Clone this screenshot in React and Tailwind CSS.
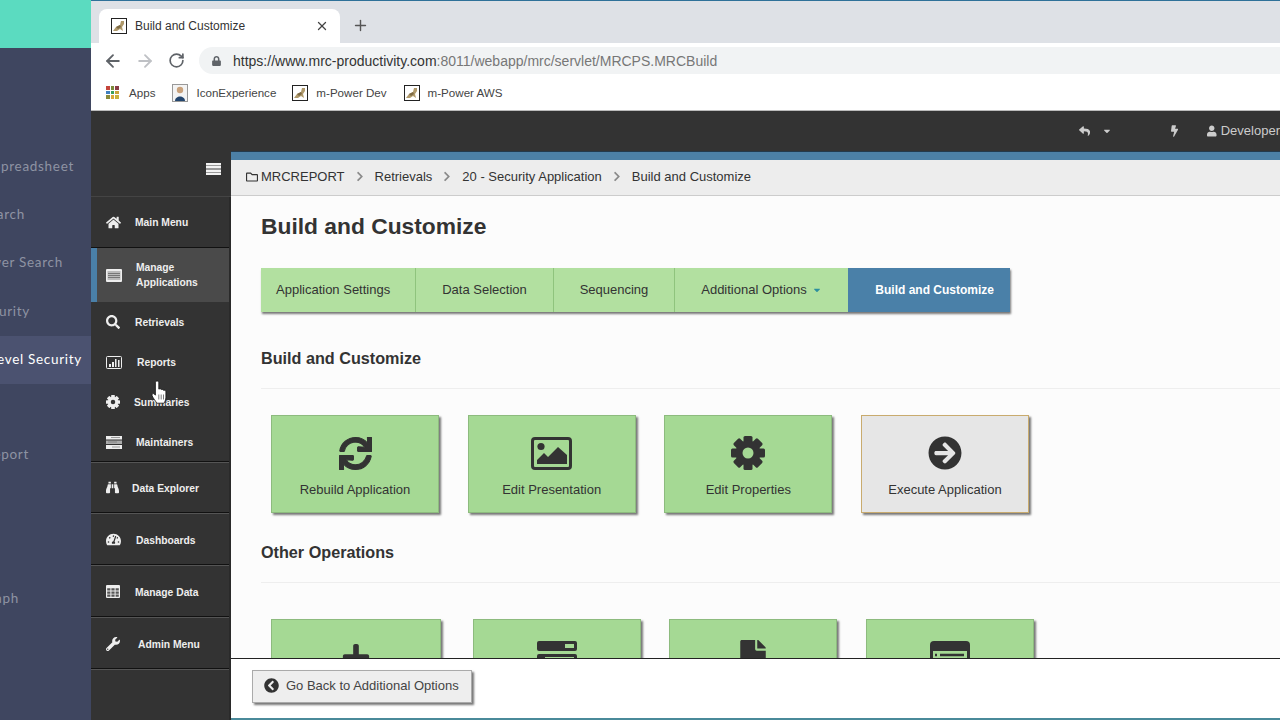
import React from 'react';
import { ArrowLeft, ArrowRight, Plus, RotateCw, X } from 'lucide-react';
import {
  FaArrowCircleRight, FaBinoculars, FaBolt, FaCaretDown, FaChevronCircleLeft,
  FaChevronRight, FaFile, FaHome, FaLock, FaPlus, FaRegFolder, FaReply,
  FaSearch, FaSync, FaTachometerAlt, FaUser, FaWrench,
} from 'react-icons/fa';

function CatIcon() {
  return (
    <svg viewBox="0 0 16 16" className="w-[16px] h-[16px] shrink-0">
      <rect x="0.5" y="0.5" width="15" height="15" fill="#fff" stroke="#222" />
      <path d="M2 13 L5 9 L9 7 L10 3 L13 3 L13 6 L11 9 L12 13 L9 11 L6 13 Z" fill="#b09a6c" />
      <path d="M5 9 L9 7 L10 9 L7 11 Z" fill="#7d6a45" />
    </svg>
  );
}

function PersonIcon() {
  return (
    <svg viewBox="0 0 16 18" className="w-[16px] h-[18px] shrink-0">
      <rect x="0.5" y="0.5" width="15" height="17" fill="#f4f4f4" stroke="#999" />
      <circle cx="8" cy="6" r="3.2" fill="#c9a27c" />
      <path d="M3 17 C3 11 13 11 13 17 Z" fill="#24466e" />
    </svg>
  );
}

function AppsIcon() {
  const colors = ['#c5453b', '#7a8a3a', '#8a3b46', '#3f7fbf', '#3ba05a', '#c9a23a', '#8a8a3a', '#d9a83a', '#c9b03a'];
  return (
    <div className="grid grid-cols-3 gap-[1px] w-[13px] h-[13px]">
      {colors.map((c, i) => <span key={i} style={{ backgroundColor: c }} />)}
    </div>
  );
}

function ManageIcon() {
  return (
    <svg viewBox="0 0 16 13" className="w-[16px] h-[13px] shrink-0">
      <rect width="16" height="13" rx="1" fill="#eee" />
      <rect x="1.5" y="2" width="13" height="9" fill="#bbb" />
      <path d="M2 4.5h12M2 6.5h12M2 8.5h12" stroke="#666" strokeWidth="0.8" />
    </svg>
  );
}

function ReportsIcon() {
  return (
    <svg viewBox="0 0 16 13" className="w-[16px] h-[13px] shrink-0">
      <rect x="0.5" y="0.5" width="15" height="12" rx="1" fill="#333" stroke="#eee" />
      <path d="M3 8h2v3H3zM6 6h2v5H6zM9 3h1.5v8H9zM12 4h1.5v7H12z" fill="#eee" />
    </svg>
  );
}

function MaintainIcon() {
  return (
    <svg viewBox="0 0 16 13" className="w-[16px] h-[13px] shrink-0">
      <rect width="16" height="3.5" fill="#eee" />
      <rect y="4.5" width="16" height="3.5" fill="#aaa" />
      <rect y="9" width="16" height="4" fill="#eee" />
      <path d="M5 1.5h9M2 6h9M6 11h8" stroke="#777" strokeWidth="0.7" />
    </svg>
  );
}

function TableIcon() {
  return (
    <svg viewBox="0 0 14 13" className="w-[14px] h-[13px] shrink-0">
      <rect width="14" height="13" rx="1" fill="#eee" />
      <path d="M1.2 3.2h3.2v2.4H1.2zM5.4 3.2h3.2v2.4H5.4zM9.6 3.2h3.2v2.4H9.6zM1.2 6.4h3.2v2.4H1.2zM5.4 6.4h3.2v2.4H5.4zM9.6 6.4h3.2v2.4H9.6zM1.2 9.6h3.2v2.2H1.2zM5.4 9.6h3.2v2.2H5.4zM9.6 9.6h3.2v2.2H9.6z" fill="#555" />
    </svg>
  );
}

// blocky eight tooth gear, the hole shows the colour behind it
function GearIcon({ className, hole }) {
  return (
    <svg viewBox="0 0 34 34" className={className}>
      {[0, 45, 90, 135].map((a) => (
        <rect key={a} x="12.5" y="0" width="9" height="34" rx="1.5" fill="currentColor" transform={`rotate(${a} 17 17)`} />
      ))}
      <circle cx="17" cy="17" r="12.5" fill="currentColor" />
      <circle cx="17" cy="17" r="5.5" fill={hole} />
    </svg>
  );
}

function PictureIcon() {
  return (
    <svg viewBox="0 0 41 33" className="w-[41px] h-[33px]">
      <rect x="1.5" y="1.5" width="38" height="30" rx="2.5" fill="none" stroke="currentColor" strokeWidth="3" />
      <circle cx="10" cy="9.5" r="3.6" fill="currentColor" />
      <path d="M6 27v-4l7-7 4 4 10-10 9 8v9z" fill="currentColor" />
    </svg>
  );
}

function ServerIcon() {
  return (
    <svg viewBox="0 0 40 32" className="w-[40px] h-[32px]">
      <rect width="40" height="10" rx="2" fill="#333" />
      <rect x="28" y="3" width="9" height="4" fill="#a5d994" />
      <rect y="13" width="40" height="10" rx="2" fill="#333" />
      <rect x="8" y="16" width="29" height="4" fill="#a5d994" />
      <rect y="26" width="40" height="6" rx="2" fill="#333" />
    </svg>
  );
}

function CardListIcon() {
  return (
    <svg viewBox="0 0 40 32" className="w-[40px] h-[32px]">
      <rect width="40" height="32" rx="4" fill="#333" />
      <rect x="3" y="10" width="34" height="19" fill="#a5d994" />
      <path d="M10 14h24M10 19h24" stroke="#333" strokeWidth="2.5" />
      <path d="M5 14h2M5 19h2" stroke="#333" strokeWidth="2.5" />
    </svg>
  );
}

function HandCursor() {
  return (
    <svg viewBox="0 0 16 24" className="absolute left-[151px] top-[380px] w-[16px] h-[25px]">
      <path
        d="M4.4 2.2c0-2.2 3.4-2.2 3.4 0v6.4l.6-.2c.9-.3 1.8 0 2 .7.8-.4 1.9-.1 2.1.7.9-.3 2.4.1 2.4 1.3v5.6c0 2.6-1.2 4.8-1.8 6H5.800c-1-2-4.600-6-4.800-8-.2-1.600 1.600-2.100 2.400-1.100l1 1.100z"
        fill="#fff"
        stroke="#111"
        strokeWidth="0.8"
      />
      <path d="M7.800 14v5M10.200 14v5M12.500 14v5" stroke="#444" strokeWidth="0.7" />
    </svg>
  );
}

const menu = [
  { label: 'Main Menu', icon: <FaHome className="w-[15px] h-[15px]" />, h: 'h-[51px]', ml: 'ml-[14px]', line: true },
  { label: 'Manage Applications', icon: <ManageIcon />, h: 'h-[54px]', ml: 'ml-[15px]', active: true },
  { label: 'Retrievals', icon: <FaSearch className="w-[14px] h-[14px]" />, h: 'h-[40px]', ml: 'ml-[14px]' },
  { label: 'Reports', icon: <ReportsIcon />, h: 'h-[40px]', ml: 'ml-[16px]' },
  { label: 'Summaries', icon: <GearIcon className="w-[14px] h-[14px] shrink-0" hole="#333" />, h: 'h-[40px]', ml: 'ml-[13px]' },
  { label: 'Maintainers', icon: <MaintainIcon />, h: 'h-[40px]', ml: 'ml-[15px]', line: true, pt: 'pt-[1px]' },
  { label: 'Data Explorer', icon: <FaBinoculars className="w-[13px] h-[13px]" />, h: 'h-[51px]', ml: 'ml-[11px]', line: true, pt: 'pt-[1px]' },
  { label: 'Dashboards', icon: <FaTachometerAlt className="w-[15px] h-[15px]" />, h: 'h-[52px]', ml: 'ml-[15px]', line: true, pt: 'pt-[2px]' },
  { label: 'Manage Data', icon: <TableIcon />, h: 'h-[52px]', ml: 'ml-[14px]', line: true, pt: 'pt-[2px]' },
  { label: 'Admin Menu', icon: <FaWrench className="w-[14px] h-[14px]" />, h: 'h-[52px]', ml: 'ml-[17px]', line: true, pt: 'pt-[2px]' },
];

const leftItems = [
  { label: 'Spreadsheet', cls: 'pr-[17px] pt-[2px]' },
  { label: 'Search', cls: 'pr-[66px] pt-[2px]' },
  { label: 'Power Search', cls: 'pr-[28px] pt-[2px] mb-[1px]' },
  { label: 'Security', cls: 'pr-[61px] pt-[2px] mb-[2px]' },
  { label: 'Row Level Security', cls: 'pr-[9px] pb-[2px]', active: true },
  { label: '' },
  { label: 'Report', cls: 'pr-[62px] pb-[3px]' },
  { label: '' },
  { label: '' },
  { label: 'Graph', cls: 'pr-[72px] pb-[4px]' },
];

function ActionCard({ icon, label, running, className = 'w-[168px]' }) {
  return (
    <div className={`${className} h-[98px] shrink-0 flex flex-col items-center pt-[20px] shadow-[2px_2px_2px_#777] border ${running ? 'bg-[#e6e6e6] border-[#c9ab6e]' : 'bg-[#a5d994] border-[#8dbb7e]'}`}>
      <div className="h-[34px] flex items-center text-[#333]">{icon}</div>
      <div className="mt-[11px] text-[13px] leading-[18px] text-[#333]">{label}</div>
    </div>
  );
}

function Crumb() {
  return <FaChevronRight className="mx-[10px] w-[10px] h-[11px] text-[#8a8a8a]" />;
}

export default function App() {
  return (
    <div className="w-[1280px] h-[720px] flex overflow-hidden relative bg-white font-['Liberation_Sans',Arial,sans-serif]">
      {/* desktop behind the browser */}
      <div className="w-[91px] shrink-0 bg-[#3f4660] flex flex-col">
        <div className="h-[48px] bg-[#5bdbc0] mb-[93px]" />
        {leftItems.map((item, i) => (
          <div
            key={i}
            className={`h-[48px] shrink-0 flex items-center justify-end overflow-hidden whitespace-nowrap font-['Lato',sans-serif] text-[13.5px] tracking-[0.7px] ${item.cls || ''} ${item.active ? 'bg-[#4b5270] text-white' : 'text-[#8e93a3]'}`}
          >
            {item.label}
          </div>
        ))}
      </div>

      {/* browser window */}
      <div className="flex-1 min-w-0 flex flex-col">
        <div className="h-[43px] bg-[#dee1e6] border-t border-[#2f7199] flex items-end pl-[8px]">
          <div className="w-[241px] h-[34px] bg-white rounded-t-[8px] flex items-center pl-[12px] pr-[11px]">
            <CatIcon />
            <span className="ml-[8px] text-[12px] text-[#333]">Build and Customize</span>
            <X size={14} strokeWidth={2.2} className="ml-auto text-[#444]" />
          </div>
          <Plus size={17} strokeWidth={2} className="ml-[12px] mb-[9px] text-[#555]" />
        </div>
        <div className="h-[31px] bg-white flex items-center pl-[12px] pt-[4px]">
          <ArrowLeft size={20} strokeWidth={2.2} className="text-[#5f6368]" />
          <ArrowRight size={20} strokeWidth={2.2} className="ml-[12px] text-[#bfc1c5]" />
          <RotateCw size={17} strokeWidth={2.4} className="ml-[13px] text-[#5f6368]" />
          <div className="ml-[14px] flex-1 h-[27px] bg-[#f1f3f4] rounded-l-full flex items-center pl-[13px]">
            <FaLock className="w-[9px] h-[10px] text-[#5f6368]" />
            <span className="ml-[12px] pt-[2px] text-[14px] text-[#333] whitespace-nowrap">
              https://www.mrc-productivity.com<span className="text-[#777]">:8011/webapp/mrc/servlet/MRCPS.MRCBuild</span>
            </span>
          </div>
        </div>
        <div className="h-[37px] bg-white border-b border-[#bbb] flex items-center pl-[15px] pt-[1px] text-[11.6px] text-[#444]">
          <AppsIcon />
          <span className="ml-[10px]">Apps</span>
          <div className="ml-[17px]"><PersonIcon /></div>
          <span className="ml-[8px]">IconExperience</span>
          <div className="ml-[16px]"><CatIcon /></div>
          <span className="ml-[8px]">m-Power Dev</span>
          <div className="ml-[17px]"><CatIcon /></div>
          <span className="ml-[8px]">m-Power AWS</span>
        </div>

        {/* app */}
        <div className="flex-1 min-h-0 flex bg-[#333]">
          <div className="w-[140px] shrink-0 flex flex-col text-[10.3px] font-bold text-[#eee]">
            <div className="h-[86px] shrink-0 flex items-end justify-end pr-[10px] pb-[21px] border-b border-[#444]">
              <div className="w-[15px] h-[12px] flex flex-col justify-between bg-[#999]">
                <span className="h-[2px] bg-[#f2f2f2]" />
                <span className="h-[2px] bg-[#f2f2f2]" />
                <span className="h-[2px] bg-[#f2f2f2]" />
                <span className="h-[2px] bg-[#f2f2f2]" />
              </div>
            </div>
            <div className="flex-1 flex flex-col border-r-[2px] border-[#2a2a2a]">
              {menu.map((item) => (
                <div
                  key={item.label}
                  className={`${item.h} shrink-0 flex items-center ${item.pt || ''} ${item.line ? 'border-b border-[#111] shadow-[0_1px_0_#555]' : ''} ${item.active ? 'bg-[#4a4a4a] border-l-[6px] border-[#4a80a8] pl-[9px]' : 'pl-[15px]'}`}
                >
                  <div className="w-[15px] shrink-0 flex justify-start">{item.icon}</div>
                  <span className={`${item.ml} ${item.active ? 'w-[70px] leading-[15px]' : 'pt-[2px]'}`}>{item.label}</span>
                </div>
              ))}
            </div>
          </div>

          <div className="flex-1 min-w-0 flex flex-col">
            <div className="h-[40px] shrink-0 flex items-center pl-[848px] text-[#ccc] overflow-hidden">
              <FaReply className="w-[14px] h-[12px]" />
              <FaCaretDown className="ml-[13px] w-[10px] h-[10px]" />
              <FaBolt className="ml-[60px] w-[9px] h-[12px]" />
              <FaUser className="ml-[29px] w-[12px] h-[12px]" />
              <span className="ml-[4px] text-[13px] whitespace-nowrap">Developer</span>
            </div>
            <div className="h-[9px] shrink-0 bg-[#4c80a6] border-t border-[#233a4d]" />
            <div className="h-[36px] shrink-0 bg-[#ededed] border-b border-[#ccc] flex items-center pl-[15px] pb-[2px] text-[13px] text-[#333]">
              <FaRegFolder className="w-[12px] h-[12px]" />
              <span className="ml-[3px]">MRCREPORT</span>
              <Crumb />
              <span>Retrievals</span>
              <Crumb />
              <span>20 - Security Application</span>
              <Crumb />
              <span>Build and Customize</span>
            </div>

            <div className="flex-1 min-h-0 overflow-hidden bg-[#fcfcfc] pl-[30px]">
              <h1 className="mt-[16px] text-[22.8px] leading-[28px] font-bold text-[#333]">Build and Customize</h1>
              <div className="mt-[28px] h-[44px] flex w-[749px] shadow-[1px_2px_2px_#777] text-[13px] text-[#333]">
                <div className="w-[155px] shrink-0 bg-[#b2e0a0] border-r border-[#8fc47d] flex items-center pl-[15px]">Application Settings</div>
                <div className="w-[138px] shrink-0 bg-[#b2e0a0] border-r border-[#8fc47d] flex items-center justify-center">Data Selection</div>
                <div className="w-[121px] shrink-0 bg-[#b2e0a0] border-r border-[#8fc47d] flex items-center justify-center">Sequencing</div>
                <div className="w-[173px] shrink-0 bg-[#b2e0a0] flex items-center justify-center">
                  Additional Options
                  <FaCaretDown className="ml-[5px] w-[10px] h-[10px] text-[#2c8f9e]" />
                </div>
                <div className="flex-1 bg-[#4a80a8] text-white text-[12px] font-bold flex items-center justify-end pr-[16px]">Build and Customize</div>
              </div>

              <h2 className="mt-[36px] text-[16.2px] leading-[20px] font-bold text-[#333]">Build and Customize</h2>
              <div className="mt-[20px] border-t border-[#eee]" />
              <div className="mt-[26px] ml-[10px] flex gap-[28.67px]">
                <ActionCard icon={<FaSync className="w-[33px] h-[33px] stroke-[16px] stroke-current" />} label="Rebuild Application" />
                <ActionCard icon={<PictureIcon />} label="Edit Presentation" />
                <ActionCard icon={<GearIcon className="w-[34px] h-[34px]" hole="#a5d994" />} label="Edit Properties" />
                <ActionCard icon={<FaArrowCircleRight className="w-[34px] h-[34px]" />} label="Execute Application" running />
              </div>

              <h2 className="mt-[29px] text-[16.2px] leading-[20px] font-bold text-[#333]">Other Operations</h2>
              <div className="mt-[20px] border-t border-[#eee]" />
              <div className="mt-[36px] ml-[10px] flex gap-[28.67px]">
                <ActionCard className="w-[170px] mr-[3px]" icon={<FaPlus className="w-[30px] h-[30px]" />} label="" />
                <ActionCard icon={<ServerIcon />} label="" />
                <ActionCard icon={<FaFile className="w-[28px] h-[34px]" />} label="" />
                <ActionCard icon={<CardListIcon />} label="" />
              </div>
            </div>

            <div className="h-[62px] shrink-0 bg-white border-t border-[#222] border-b-2 border-b-[#4a8a9a] pl-[21px] pt-[11px]">
              <div className="w-[220px] h-[33px] bg-[#eee] border border-[#aaa] shadow-[2px_2px_2px_#777] flex items-center pl-[11px] pb-[2px] text-[13px] text-[#444]">
                <FaChevronCircleLeft className="w-[15px] h-[15px] text-[#333]" />
                <span className="ml-[7px] whitespace-nowrap">Go Back to Additional Options</span>
              </div>
            </div>
          </div>
        </div>
      </div>

      {/* mouse pointer in the capture */}
      <HandCursor />
    </div>
  );
}
